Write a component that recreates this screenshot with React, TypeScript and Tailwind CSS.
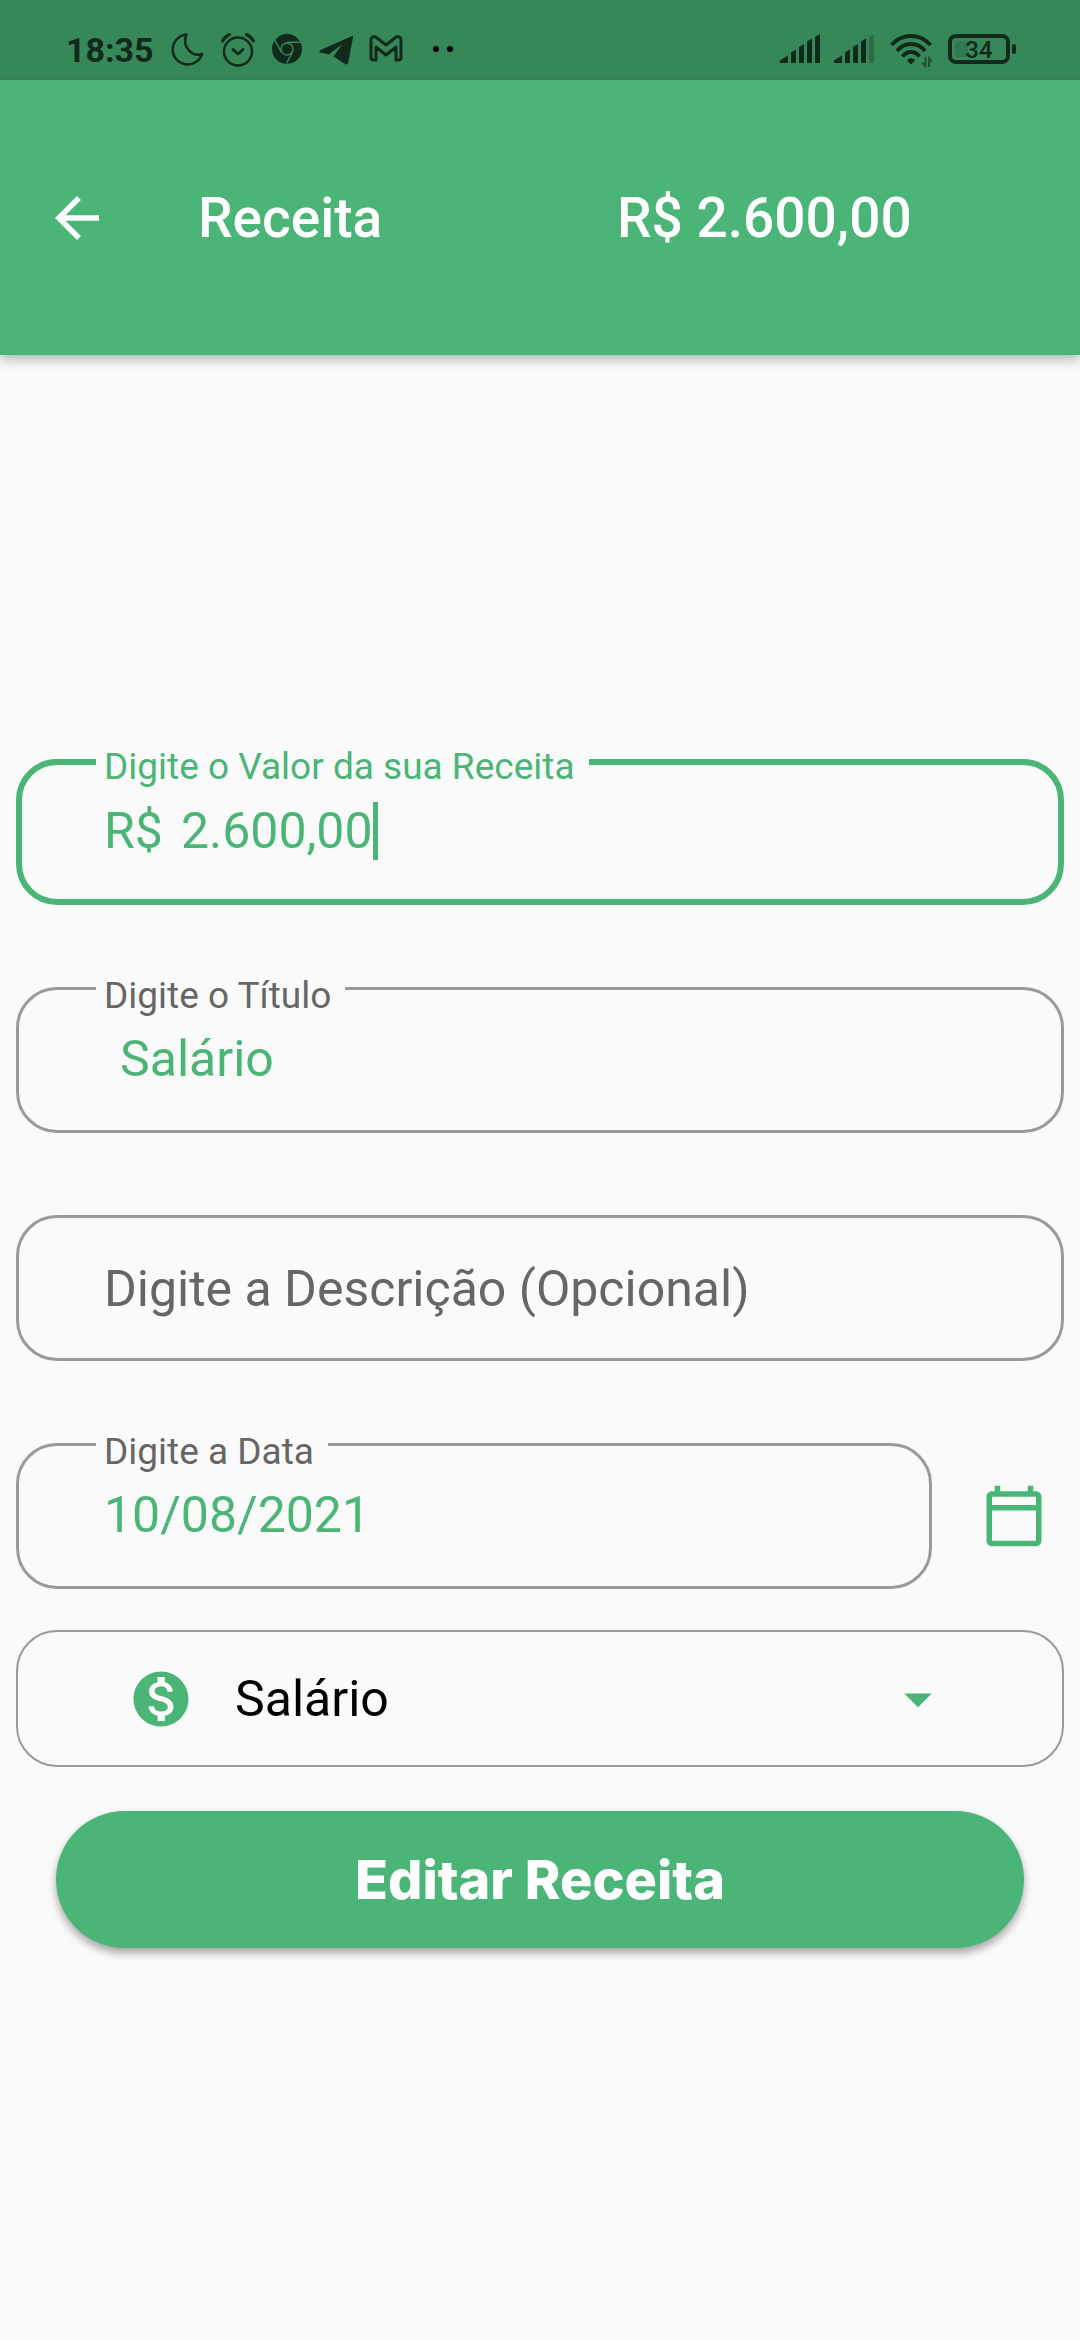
import { useState, type ReactNode } from "react";

function StatusIcon({ width, children }: { width: number; children: ReactNode }) {
  return (
    <svg width={width} height={40} viewBox={`0 0 ${width} 40`} fill="none" className="shrink-0" aria-hidden="true">
      {children}
    </svg>
  );
}

function Signal({ weak = false }: { weak?: boolean }) {
  return (
    <StatusIcon width={40}>
      <g fill="currentColor">
        <path d="M0 33V30.5L8 25.5V33Z" />
        <path d="M11 33V22.5L16 19.5V33Z" />
        <path d="M19 33V17L24 14V33Z" />
        <path d="M27 33V11.5L32 8.5V33Z" />
        <path d="M35 33V7L40 4V33Z" opacity={weak ? 0.3 : 1} />
      </g>
    </StatusIcon>
  );
}

function StatusBar() {
  return (
    <div className="flex h-20 items-center justify-between bg-[#378859] pt-5 pr-16 pl-[66px] text-[#10291b]">
      <div className="flex items-center">
        <span className="mr-[17px] text-[34px] leading-10 font-bold">18:35</span>
        <div className="flex items-center gap-4">
          <StatusIcon width={34}>
            <path
              d="M15.5 4.5A15 15 0 1 0 31 24C21 27 10.500 17 15.500 4.500Z"
              stroke="currentColor"
              strokeWidth="2.500"
              strokeLinejoin="round"
            />
          </StatusIcon>
          <StatusIcon width={34}>
            <g stroke="currentColor" strokeWidth="2.500" strokeLinecap="round" strokeLinejoin="round">
              <circle cx="17" cy="21.500" r="14" />
              <path d="M12 19.500L17 24L22 19.500" strokeWidth="3" />
              <path d="M1.500 11C3 8 5 6 8.500 4.500M32.500 11C31 8 29 6 25.500 4.500" strokeWidth="3" />
            </g>
          </StatusIcon>
          <StatusIcon width={32}>
            <circle cx="16" cy="19" r="15" fill="currentColor" />
            <g stroke="#378859" strokeWidth="1.500">
              <circle cx="16" cy="19" r="6" />
              <path d="M16 12.300H30M10.300 22L3.500 9.500M21 23L15.500 33.500" />
            </g>
          </StatusIcon>
          <StatusIcon width={34}>
            <path
              d="M33 6L1.500 20C-.2 20.900 0 22 1.500 22.500L9.500 24.500L23 14.500L14.500 26.500L26.500 34.200C27.800 35 28.800 34.300 29.200 32.800L34 7.200C34.200 6 33.800 5.700 33 6Z"
              fill="currentColor"
            />
          </StatusIcon>
          <StatusIcon width={34}>
            <path
              d="M7 30H4.500A2.500 2.500 0 0 1 2 27.500V10C2 7 5 5.500 7.500 7.500L17 15L26.500 7.500C29 5.500 32 7 32 10V27.500A2.500 2.500 0 0 1 29.500 30H27V17L17 25L7 17Z"
              stroke="currentColor"
              strokeWidth="3"
              strokeLinejoin="round"
            />
          </StatusIcon>
          <StatusIcon width={48}>
            <circle cx="17" cy="19" r="3" fill="#000" />
            <circle cx="31" cy="19" r="3" fill="#000" />
          </StatusIcon>
        </div>
      </div>
      <div className="flex items-center gap-4">
        <div className="flex gap-3.5">
          <Signal />
          <Signal weak />
        </div>
        <StatusIcon width={42}>
          <g stroke="currentColor" strokeWidth="4">
            <path d="M1.500 15C12 3 30 3 40.500 15" />
            <path d="M7 21C14 11.800 28 11.800 35 21" />
            <path d="M12.500 26.500C17 20.500 25 20.500 29.500 26.500" />
          </g>
          <path d="M17 30.500C18.500 27.500 23.500 27.500 25 30.500L21 34.500Z" fill="currentColor" />
          <path d="M35.500 27V36L32 32.500M39 37V28L42 32" stroke="currentColor" strokeWidth="2" opacity="0.600" />
        </StatusIcon>
        <div className="relative">
          <StatusIcon width={68}>
            <rect x="7" y="11" width="13" height="16" rx="2" fill="currentColor" opacity="0.150" />
            <rect x="2" y="6" width="58" height="26" rx="6" stroke="currentColor" strokeWidth="4" />
            <rect x="64" y="14" width="4" height="10" rx="2" fill="currentColor" />
          </StatusIcon>
          <span className="absolute top-0 left-0 w-[62px] text-center text-[24px] leading-10 font-medium">34</span>
        </div>
      </div>
    </div>
  );
}

function Header({ amount }: { amount: string }) {
  return (
    <header className="relative flex h-[275px] items-center bg-[#4ab577] pl-11 text-white shadow-[0_4px_12px_rgba(0,0,0,0.3)]">
      <button type="button" aria-label="Voltar" className="mr-[88px]">
        <svg viewBox="0 0 24 24" fill="currentColor" className="size-[66px]" aria-hidden="true">
          <path d="M20 11H7.830l5.590-5.590L12 4l-8 8 8 8 1.410-1.410L7.830 13H20v-2z" />
        </svg>
      </button>
      <div className="grid flex-1 grid-cols-[419px_1fr] text-[55px] leading-16 font-medium">
        <h1>Receita</h1>
        <p>R$ {amount}</p>
      </div>
    </header>
  );
}

type FieldProps = {
  id: string;
  label: string;
  value: string;
  onChange: (value: string) => void;
  focused?: boolean;
  prefix?: string;
  inset?: boolean;
};

function Field({ id, label, value, onChange, focused = false, prefix, inset = false }: FieldProps) {
  return (
    <div
      className={`relative flex flex-1 items-center rounded-[41px] text-[50px] leading-[58px] text-[#4ab577] ${
        focused
          ? "border-6 border-[#4ab577] px-[82px] pt-[37px] pb-[39px]"
          : "border-3 border-[#9a9a9a] px-[85px] pt-[40px] pb-[42px]"
      }`}
    >
      <label
        htmlFor={id}
        className={`absolute bg-[#fafafa] pr-3.5 pl-2 text-[37px] leading-11 ${
          focused ? "-top-5 left-[74px] text-[#4ab577]" : "-top-4 left-[77px] text-[#666]"
        }`}
      >
        {label}
      </label>
      {prefix && <span className="mr-4.5">{prefix}</span>}
      <input
        id={id}
        value={value}
        onChange={(e) => onChange(e.target.value)}
        className={`h-[58px] min-w-0 outline-none ${focused ? "field-sizing-content" : "w-full"} ${inset ? "pl-4" : ""}`}
      />
      {focused && <span className="h-[58px] w-[5px] bg-[#4ab577]" aria-hidden="true" />}
    </div>
  );
}

export default function App() {
  const [amount, setAmount] = useState("2.600,00");
  const [title, setTitle] = useState("Salário");
  const [description, setDescription] = useState("");
  const [date, setDate] = useState("10/08/2021");
  const [category, setCategory] = useState("Salário");

  return (
    <div className="min-h-screen bg-[#fafafa] font-[Roboto,sans-serif]">
      <StatusBar />
      <Header amount={amount} />
      <form className="flex flex-col px-4 pt-[404px]" onSubmit={(e) => e.preventDefault()}>
        <div className="flex flex-col gap-[82px]">
          <Field id="amount" label="Digite o Valor da sua Receita" value={amount} onChange={setAmount} prefix="R$" focused />
          <Field id="title" label="Digite o Título" value={title} onChange={setTitle} inset />
          <input
            aria-label="Digite a Descrição (Opcional)"
            placeholder="Digite a Descrição (Opcional)"
            value={description}
            onChange={(e) => setDescription(e.target.value)}
            className="h-[146px] rounded-[41px] border-3 border-[#9a9a9a] px-[85px] pt-0.5 text-[50px] text-[#4ab577] outline-none placeholder:text-[#666]"
          />
          <div className="flex items-center">
            <Field id="date" label="Digite a Data" value={date} onChange={setDate} />
            <button type="button" aria-label="Escolher data" className="mr-[17px] ml-[49px] text-[#4ab577]">
              <svg viewBox="0 0 24 24" fill="currentColor" className="size-[66px]" aria-hidden="true">
                <path d="M20 3h-1V1h-2v2H7V1H5v2H4c-1.100 0-2 .9-2 2v16c0 1.100.9 2 2 2h16c1.100 0 2-.9 2-2V5c0-1.100-.9-2-2-2zm0 18H4V10h16v11zm0-13H4V5h16v3z" />
              </svg>
            </button>
          </div>
        </div>

        <div className="mt-[41px] flex h-[137px] items-center rounded-[41px] border-2 border-[#9a9a9a] pr-[111px] pl-[110px] text-[#4ab577]">
          <svg viewBox="0 0 24 24" fill="currentColor" className="size-[66px] shrink-0" aria-hidden="true">
            <path d="M12 2C6.480 2 2 6.480 2 12s4.480 10 10 10 10-4.480 10-10S17.520 2 12 2zm1.410 16.090V20h-2.670v-1.930c-1.710-.36-3.160-1.460-3.270-3.400h1.960c.1 1.050.82 1.870 2.650 1.870 1.960 0 2.400-.98 2.400-1.590 0-.83-.44-1.610-2.670-2.140-2.480-.6-4.180-1.620-4.180-3.670 0-1.720 1.390-2.840 3.110-3.210V4h2.670v1.950c1.860.45 2.790 1.860 2.850 3.390H14.300c-.05-1.110-.64-1.870-2.220-1.870-1.500 0-2.400.68-2.400 1.640 0 .84.65 1.390 2.670 1.910s4.180 1.390 4.180 3.910c-.01 1.830-1.380 2.830-3.120 3.160z" />
          </svg>
          <select
            aria-label="Categoria"
            value={category}
            onChange={(e) => setCategory(e.target.value)}
            className="ml-[41px] min-w-0 flex-1 appearance-none bg-transparent text-[50px] leading-[58px] text-black outline-none"
          >
            <option>Salário</option>
          </select>
          <svg viewBox="0 0 24 24" fill="currentColor" className="size-[66px] shrink-0" aria-hidden="true">
            <path d="M7 10l5 5 5-5z" />
          </svg>
        </div>

        <button
          type="submit"
          className="mx-10 mt-11 h-[137px] rounded-full bg-[#4ab577] font-[Inter,sans-serif] text-[54px] font-extrabold text-white shadow-[0_5px_8px_rgba(0,0,0,0.35)]"
        >
          Editar Receita
        </button>
      </form>
    </div>
  );
}
